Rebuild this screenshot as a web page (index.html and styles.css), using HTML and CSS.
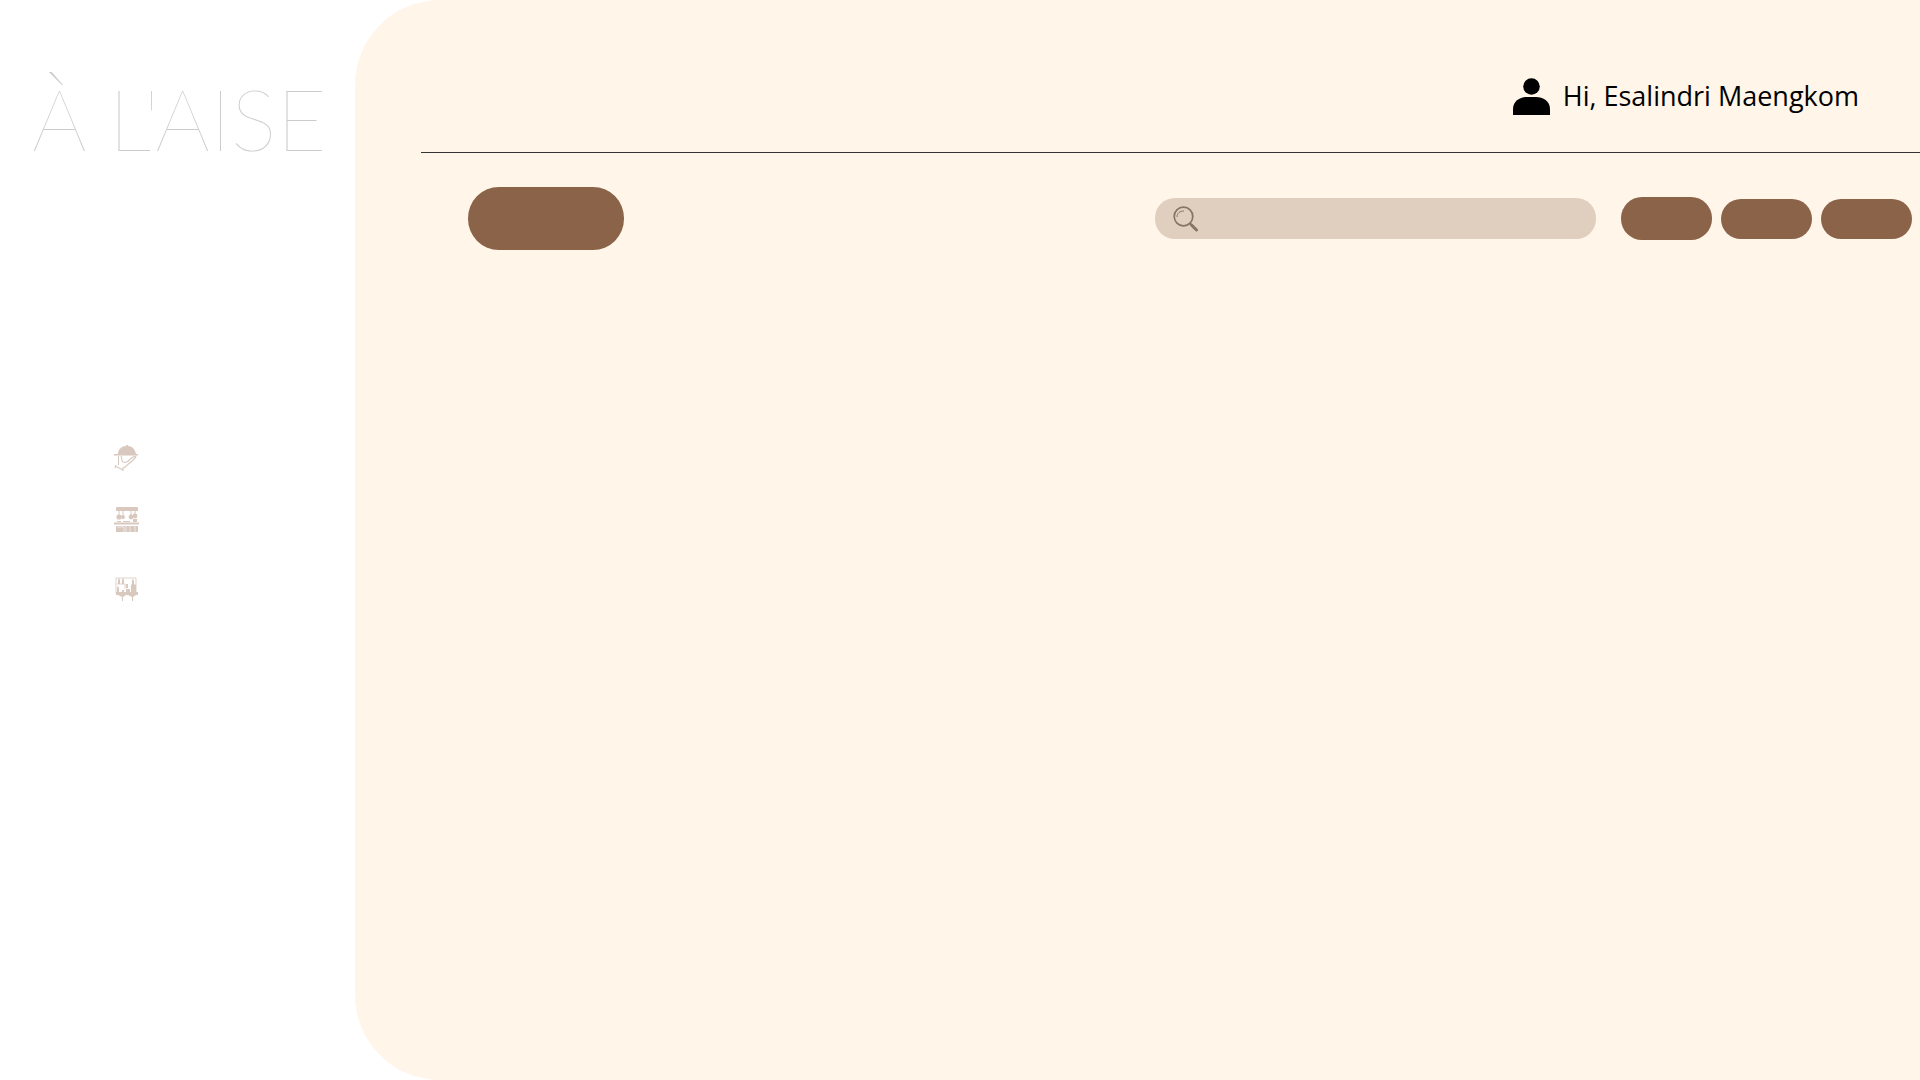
FILE: index.html
```html
<!DOCTYPE html>
<html lang="en">
<head>
  <meta charset="utf-8">
  <meta name="viewport" content="width=device-width, initial-scale=1">
  <title>À L'AISE</title>
  <link rel="stylesheet" href="styles.css">
</head>
<body>
  <div class="app">
    <aside class="sidebar">
      <h1 class="brand">À L'AISE</h1>
      <nav class="menu" aria-label="Main">
        <a class="menu-link" href="#orders" aria-label="Orders">
          <svg class="menu-icon" viewBox="0 0 26 28">
            <path fill="currentColor" d="M4 10C4 5 8 2 12 2V1h2v1c4 0 7 3 8 8zM0 10h24v1.500H0z"/>
            <path fill="none" stroke="currentColor" stroke-width="1.100" d="M4.500 12v9M7 12c1 2 0 4 2 6 4 1 6-1 7-3l5-3M22 12c-1 4-6 6-12 12M1 22l8 4M2 21l-1 3M9 23v4"/>
          </svg>
        </a>
        <a class="menu-link" href="#kitchen" aria-label="Kitchen">
          <svg class="menu-icon" viewBox="0 0 26 28">
            <g fill="currentColor">
              <path d="M2 2q0-1 1-1h20q1 0 1 1v3H2zM4.500 5h1v4h-1zM8.500 5h1v4h-1zM16.500 5h1v4h-1zM20.500 5h1v4h-1z"/>
              <circle cx="5" cy="11" r="2.600"/><circle cx="9" cy="11" r="2"/>
              <circle cx="17" cy="11" r="2.400"/><circle cx="21" cy="10" r="2.400"/>
              <path d="M3 15h4v1H3zM9 15h7v1H9zM19 13h4v3h-4zM0 16.500h25v2H0zM2 20h22v6H2z"/>
            </g>
            <path fill="none" stroke="#fff" stroke-width=".6" d="M3 21h7v5M12 20v6M16 20v6M21 20v6"/>
          </svg>
        </a>
        <a class="menu-link menu-link-last" href="#bar" aria-label="Bar">
          <svg class="menu-icon" viewBox="0 0 26 28">
            <path fill="none" stroke="currentColor" stroke-width=".8" d="M2 17V2h20v15M3 8h8M11 8v5"/>
            <path fill="currentColor" d="M4 8V4l1-2 1 2v4zM8 8V4l1-2 1 2v4zM12 8h2v4h-2zM18 8V4l1-1 1 2v3l2 1v7h-5V9zM3 17v-5l1-2 1 2v5zM8 14h2v3H8zM12 13h4v4h-4zM2 16h22v3H2zM4 19h8l-3 2v4H8v-4zM14 19h8l-3 2v4h-1v-4z"/>
          </svg>
        </a>
      </nav>
    </aside>

    <main class="content">
      <header class="topbar">
        <svg class="user-icon" viewBox="0 0 37 37" aria-hidden="true">
          <circle cx="18.500" cy="8.500" r="8.300"/>
          <path d="M0 37V31C0 23 7 19 14 19h9c7 0 14 4 14 12v6z"/>
        </svg>
        <span class="greeting">Hi, Esalindri Maengkom</span>
      </header>
      <div class="toolbar">
        <button class="pill pill-large" type="button" aria-label="Add"></button>
        <form class="search" role="search">
          <label class="search-label" for="search" aria-label="Search">
            <svg class="search-icon" viewBox="0 0 26 26" fill="none" stroke="currentColor">
              <circle cx="10.500" cy="10.500" r="9.300" stroke-width="1.700"/>
              <path stroke-width="1" d="M4 11c0-4 3-6 7-6"/>
              <path stroke-width="2" d="M16.500 17l2 2"/>
              <path stroke-width="3" stroke-linecap="round" d="M18.500 19l5 5"/>
            </svg>
          </label>
          <input class="search-input" id="search" type="search">
        </form>
        <div class="actions">
          <button class="pill pill-tall" type="button" aria-label="Edit"></button>
          <button class="pill" type="button" aria-label="Delete"></button>
          <button class="pill" type="button" aria-label="Filter"></button>
        </div>
      </div>
    </main>
  </div>
</body>
</html>
```
FILE: styles.css
```css
* {
  box-sizing: border-box;
}

body {
  margin: 0;
  background: #fff;
  color: #000;
  font-family: "Open Sans", sans-serif;
}

.app {
  display: flex;
  min-height: 100vh;
}

.sidebar {
  flex: 0 0 355px;
  padding-top: 66px;
}

.brand {
  margin: 0;
  padding-left: 32px;
  color: #ccc;
  font-family: Lato, sans-serif;
  font-size: 86px;
  font-weight: 100;
  line-height: 104px;
  white-space: nowrap;
}

.menu {
  display: flex;
  flex-direction: column;
  gap: 34px;
  padding: 274px 0 0 114px;
}

.menu-link {
  display: flex;
  width: 26px;
  color: #d8c8be;
}

.menu-link-last {
  margin-top: 8px;
}

.menu-icon {
  width: 26px;
  height: 28px;
}

.content {
  flex: 1;
  min-width: 0;
  padding-left: 66px;
  border-radius: 85px 0 0 85px;
  background: #fff5e8;
}

.topbar {
  display: flex;
  align-items: center;
  justify-content: flex-end;
  gap: 13px;
  height: 153px;
  padding: 40px 61px 0 0;
  border-bottom: 1px solid #333;
}

.user-icon {
  width: 37px;
  height: 37px;
}

.greeting {
  font-size: 27px;
  line-height: 36px;
}

.toolbar {
  display: flex;
  align-items: center;
  padding: 34px 8px 0 47px;
}

.pill {
  width: 91px;
  height: 40px;
  padding: 0;
  border: 0;
  border-radius: 20px;
  background: #8b6349;
}

.pill-tall {
  height: 43px;
  border-radius: 21px;
}

.pill-large {
  width: 156px;
  height: 63px;
  border-radius: 31px;
}

.search {
  display: flex;
  align-items: center;
  width: 441px;
  height: 41px;
  margin-left: auto;
  padding: 0 18px;
  border-radius: 20px;
  background: #e0cebf;
}

.search-label {
  display: flex;
  color: #857565;
}

.search-icon {
  width: 26px;
  height: 26px;
}

.search-input {
  flex: 1;
  min-width: 0;
  margin-left: 12px;
  border: 0;
  outline: 0;
  background: transparent;
  font: inherit;
}

.actions {
  display: flex;
  align-items: center;
  gap: 9px;
  margin-left: 25px;
}
```
